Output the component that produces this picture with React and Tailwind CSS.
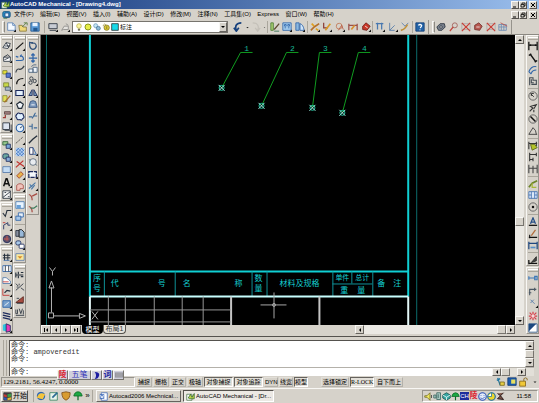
import React from "react";
import clsx from "clsx";

const NAVY = "#1c2a5c";
const INK = "#26303c";
const BLUE = "#2f64a8";
const RED = "#c0302c";

const corner = <path d="M12 9v3H9z" fill="#111" stroke="none" />;

// Every glyph is drawn on a 12x12 grid
const ICONS = {
  app: <><path d="M1 3h7v8H1z" fill="#fff" stroke="#48734a" /><path d="M3 8l3-5 2 4 3-5v7H5z" fill="#b8d24a" stroke="#33682f" /></>,
  doc: <><rect x="1" y="2" width="10" height="8" rx="2" fill="#2a8fc4" stroke="#14517f" /><path d="M4 4h5v5H4z" fill="#dff2ff" stroke="#1c3e7a" /><path d="M2 11h5" stroke="#2f6a34" /></>,
  newFile: <><path d="M2 1h6l3 3v6H2z" fill="#f4f9ff" stroke="#5a82b4" /><path d="M8 1v3h3" stroke="#5a82b4" />{corner}</>,
  openFile: <><path d="M1 4h4l1 2h4v5H2z" fill="#f0d878" stroke="#8a7a3c" /><path d="M5 6l5-5M7 1h4v3" stroke="#567a3c" /></>,
  save: <><path d="M1 1h10v10H1z" fill="#5b9bd8" stroke="#24588f" /><path d="M3 1h6v4H3z" fill="#e8f2ff" stroke="none" /><path d="M4 7h5v4H4z" fill="#24588f" stroke="none" /></>,
  plot: <><path d="M1 2h10v6H1z" fill="#c8ccd4" stroke={INK} /><path d="M2 10h8" stroke={INK} />{corner}</>,
  props: <><path d="M2 10l3-5h5v4H4z" fill="#e4e2de" stroke="#8c8a88" /><path d="M7 2l3 2" stroke="#8c8a88" />{corner}</>,
  bulb: <><circle cx="6" cy="4.500" r="3.500" fill="#fbf6a0" stroke="#b4a83a" /><path d="M5 9h2v2H5z" fill="#8a8a60" stroke="#5c5c40" /></>,
  sun: <circle cx="6" cy="6" r="4.500" fill="#e8ee48" stroke="#8c9a1c" strokeWidth="1.500" />,
  freeze: <><circle cx="4" cy="4" r="3" fill="#c4e4f4" stroke="#5c8eb0" /><circle cx="8" cy="8" r="3" fill="#8cbcd8" stroke="#40688c" /></>,
  lock: <><path d="M2 5V3q2-3 4 0v2" stroke="#948a28" /><circle cx="7" cy="7" r="4" fill="#d8c838" stroke="#7a6c1c" /><path d="M7 5v4" stroke="#7a6c1c" /></>,
  swatch: <path d="M1 1h10v10H1z" fill="#18d8e8" stroke="#101010" />,
  undo: <path d="M10 1C4 1 2 5 4 10M1 7l3 4 3-4" stroke="#16407c" strokeWidth="2" />,
  redo: <path d="M2 1c6 0 8 4 6 9M11 7l-3 4-3-4" stroke="#c4c0b8" strokeWidth="1.500" />,
  dot: <path d="M3 5h6L6 8z" fill="#222" stroke="none" />,
  match: <><path d="M1 1h3v9H1z" fill="#a8cc70" stroke="#4c7c34" /><path d="M5 9l6-7" stroke="#5c4a30" strokeWidth="1.500" /><path d="M5 11h6" stroke="#2c6c4c" /></>,
  palette: <><path d="M1 1h10v9H1z" fill="#a8d0f0" stroke={BLUE} /><path d="M3 3h2v2H3zM7 3h2v2H7zM3 7h2M7 7h2" stroke={BLUE} />{corner}</>,
  sheets: <><path d="M1 1h4v9H1z" fill="#8cb8e0" stroke={BLUE} /><path d="M6 2q4 1 5 8H6z" fill="#cfe4f8" stroke={BLUE} />{corner}</>,
  editA: <><path d="M1 10l4-4 6-4" stroke="#b4702c" strokeWidth="2" /><path d="M2 2l3 3M7 8l3 2" stroke="#e0a020" strokeWidth="2" />{corner}</>,
  editB: <><path d="M2 1v6h5" stroke="#8c4038" strokeWidth="1.500" /><path d="M4 10l6-8" stroke="#d89828" strokeWidth="2" />{corner}</>,
  editC: <><circle cx="5" cy="5" r="3.500" stroke="#c07858" /><path d="M4 10l4-6 2 5" stroke="#b8543c" />{corner}</>,
  editD: <><path d="M1 2v8M11 2v8M1 4h10" stroke="#9c5048" strokeWidth="1.500" /><path d="M4 9l4-5" stroke="#d89030" strokeWidth="2" /></>,
  part: <><path d="M2 5l4-4 5 4-4 5-5-1z" fill="#c83828" stroke="#701c18" /><path d="M5 5l3 2" stroke="#fff" />{corner}</>,
  ucsA: <><path d="M3 1v8M8 1v8M1 2h9" stroke="#4878b0" strokeWidth="1.500" />{corner}</>,
  ucsB: <><path d="M2 1v9h6M2 10l6-6" stroke="#5078a8" />{corner}</>,
  brush: <><path d="M2 1l4 4 4-4" stroke="#547cb0" /><path d="M1 10q5-1 8-7" stroke="#c09038" strokeWidth="2" /></>,
  help: <><path d="M1 1h10v10H1z" fill="#2464a8" stroke="#123c74" /><path d="M4 4q2-2 4 0 0 2-2 3M6 9v1" stroke="#fff" strokeWidth="1.500" /></>,
  gear: <><path d="M1 6l4-4h5l1 4-4 4H3z" fill="#78808c" stroke={INK} /><circle cx="6" cy="6" r="1.500" fill="#e8e8e8" stroke={INK} /></>,
  find: <><circle cx="7" cy="4" r="3" stroke="#a05c54" /><path d="M1 11l4-5" stroke="#c0453c" strokeWidth="1.500" /></>,
  cross: <><path d="M1 2h10v7H1z" stroke="#b0a8a8" /><path d="M1 1l10 10M11 1L1 11" stroke="#c84038" strokeWidth="1.500" /></>,
  mech: <><path d="M2 4l5-3 4 4-3 5-6-1z" fill="#b85850" stroke="#74302c" /><path d="M4 6h4" stroke="#eee" /></>,
  grid: <><path d="M1 3h9v7H1zM1 6h9M4 3v7M7 3v7" stroke="#6c8cb4" /><path d="M3 1l8 4" stroke="#c05048" /></>,

  view: <><path d="M1 8l4-6 5 1-3 6z" fill="#fff" stroke={INK} /><path d="M3 6h7M5 2l3 6" stroke={INK} />{corner}</>,
  sketch: <><path d="M2 5h8v5H2z" fill="#fff" stroke={INK} /><path d="M2 5l5-3 3 3M3 8l5-2" stroke={INK} />{corner}</>,
  layerA: <><path d="M1 2h5v4H1z" fill="#e8e038" stroke="#7c8430" /><path d="M5 5h5v5H5z" fill="#5878d0" stroke="#243c84" />{corner}</>,
  layerB: <><path d="M2 1h6v5H2z" fill="#c8d848" stroke="#788438" /><path d="M4 6h6v4H4z" fill="#a8b8c8" stroke="#506070" />{corner}</>,
  layerC: <><path d="M1 2h5v7H1z" fill="#e0e058" stroke="#8c8c38" /><path d="M3 10l7-8" stroke="#a86c28" strokeWidth="1.500" />{corner}</>,
  screw: <><path d="M3 2h7v3H3z" fill="#a08080" stroke="#5c4444" /><path d="M4 6v3H1" stroke="#9c3c38" strokeWidth="1.500" />{corner}</>,
  copyBox: <><path d="M1 1h8v8H1z" fill="#dce4f0" stroke={INK} /><path d="M3 10h8V3" stroke={INK} />{corner}</>,
  block: <><path d="M1 2h6v4H1z" fill="#98c890" stroke="#2c6034" /><path d="M5 5h5v5H5z" fill="#78a8d8" stroke={NAVY} />{corner}</>,
  blocks: <><rect x="1" y="1" width="7" height="6" rx="2" fill="#6ca8a0" stroke={NAVY} /><path d="M5 5h5v5H5z" fill="#88acd8" stroke={NAVY} />{corner}</>,
  panel: <><path d="M1 2h9v7H1z" fill="#c4dcf4" stroke="#5478a8" />{corner}</>,
  textA: <><path d="M2 10l3-9h1l3 9M3 7h5" stroke="#111" strokeWidth="1.800" />{corner}</>,
  table: <><path d="M1 1h9v9H1z" fill="#f4f4f4" stroke={INK} /><path d="M1 9l9-7M3 3h2M7 8h2" stroke={INK} />{corner}</>,
  check: <><path d="M1 6l3 4 2-7h5" stroke={INK} strokeWidth="1.300" />{corner}</>,
  jog: <><path d="M2 10V5l5-3v3h3" stroke={NAVY} /><path d="M1 2h3" stroke={RED} />{corner}</>,
  ball: <><circle cx="6" cy="6" r="4.500" fill="#605068" stroke={NAVY} /><path d="M2 6h6M6 2v6" stroke="#d85c50" />{corner}</>,
  spring: <><path d="M1 4h9M1 7h9M3 2v8M7 2v8" stroke={INK} strokeWidth="1.200" /><path d="M2 10h7" stroke={BLUE} />{corner}</>,
  cols: <><path d="M1 2h10v7H1z" fill="#fff" stroke={BLUE} /><path d="M4 2v7M8 2v7" stroke={INK} />{corner}</>,
  chart: <><path d="M1 9V2h4l5 4v3z" fill="#fff" stroke="#5078a8" /><path d="M1 7h7" stroke={RED} />{corner}</>,
  axis: <><path d="M1 2v8h8" stroke={RED} /><path d="M3 7l3-3 4 1" stroke={INK} strokeWidth="1.500" />{corner}</>,
  calc: <><path d="M1 2h9v8H1z" fill="#78a0cc" stroke={BLUE} /><path d="M3 8l5-4" stroke="#fff" />{corner}</>,
  threads: <><path d="M1 2l9 2M1 5l9 2M1 8l9 2" stroke={NAVY} strokeWidth="1.500" />{corner}</>,
  color: <><path d="M1 2l4-1v9l-4-1z" fill="#30c4e0" stroke="none" /><path d="M5 1l5 2v7l-5 1z" fill="#e838b8" stroke={NAVY} />{corner}</>,

  line: <><path d="M1 10l9-8" stroke="#111" strokeWidth="1.400" />{corner}</>,
  pline: <path d="M1 9h6q4 0 3-3T6 4l2-2M1 4l3 1" stroke={BLUE} strokeWidth="1.400" />,
  spline: <path d="M1 9q1-5 4-4t6-4" stroke="#3c444c" strokeWidth="1.400" />,
  arc: <><path d="M2 10Q2 3 10 3" stroke="#111" strokeWidth="1.400" />{corner}</>,
  rect: <><path d="M1 3h9v6H1z" fill="#e4f0fc" stroke={NAVY} strokeWidth="1.400" />{corner}</>,
  polygon: <path d="M6 2l4 3-2 5H4L2 5z" fill="#f0f4f8" stroke={INK} strokeWidth="1.400" />,
  cloud: <path d="M2 3q2-3 4-1 4-1 4 2 2 3-1 4-1 3-3 1-4 1-4-2-2-2 0-4z" fill="#e0f0ff" stroke={NAVY} strokeWidth="1.300" />,
  circle: <><circle cx="6" cy="6" r="4.500" fill="#e4f0fc" stroke={BLUE} strokeWidth="1.400" /><path d="M6 6l3-2" stroke={INK} />{corner}</>,
  dashed: <><path d="M1 10l9-8" stroke="#444" strokeDasharray="3 1" />{corner}</>,
  hatch: <><path d="M1 1h10v10H1z" fill="#b8d4f4" stroke="none" /><path d="M1 3l8 8M1 7l4 4M3 1l8 8M7 1l4 4M9 1L1 9M11 3l-8 8M5 1L1 5M11 7l-4 4" stroke="#4878c0" /></>,
  xline: <><path d="M1 10l9-8M2 3l9 6" stroke={RED} strokeWidth="1.400" />{corner}</>,
  eraser: <><path d="M2 7l5-5 3 3-5 5z" fill="#e8b44c" stroke="#9c3c24" />{corner}</>,
  region: <><path d="M2 10V4q4-4 8 0v4H6v2z" fill="#f0c4bc" stroke="#a85048" />{corner}</>,
  sheet: <><path d="M1 2h10v8H1z" fill="#e8f4ff" stroke="#4c7cb0" /><path d="M2 6h5v4H2z" fill="#68a0d8" stroke="none" /></>,
  stack: <><path d="M4 1h6v5H4z" fill="#e8f0f8" stroke={BLUE} /><path d="M1 5h6v5H1z" fill="#a8c8e8" stroke={BLUE} /></>,
  paste: <><path d="M1 3h4v7H1z" fill="#8890a0" stroke={INK} /><path d="M5 2h3l3 3v6H5z" fill="#98b8d8" stroke="#111" /></>,
  link: <><rect x="1" y="1" width="6" height="5" rx="2" fill="#a8c8e8" stroke={NAVY} /><rect x="5" y="5" width="6" height="5" rx="1" fill="#fff" stroke={NAVY} />{corner}</>,
  mail: <><path d="M1 2h10v8H1z" fill="#f8e8a0" stroke="#5c7cb0" /><path d="M3 5h6L6 8z" fill="#d88828" stroke="none" /></>,
  weldA: <path d="M1 3v6M4 2v3M4 7v3M7 3h3M7 8h3M1 6h9" stroke={INK} strokeWidth="1.400" />,
  weldB: <path d="M1 2l3 3M1 10l9-8M7 7l4 3M5 2v2M2 6h2" stroke={INK} />,
  weldC: <><path d="M1 9l9-7v7z" fill="#a84c40" stroke="#58241c" /><path d="M2 10h8M2 4h3" stroke={INK} /></>,
  weldD: <path d="M1 3v5h2V3M5 2l2 6 2-6M10 4v5M1 10h10" stroke={INK} />,

  rotate: <path d="M4 3q5-2 6 3-1 4-4 4T2 6V1M2 2h4" stroke="#34547c" strokeWidth="1.500" />,
  move: <path d="M6 1v10M1 6h10M4 3l2-2 2 2M4 9l2 2 2-2" stroke={BLUE} strokeWidth="1.500" />,
  copy: <><path d="M1 6h5v4H1zM6 4h5v6H6z" fill="#eef4fa" stroke="#48607c" /><path d="M4 3l3-2h3" stroke="#48607c" /></>,
  array: <><circle cx="4" cy="3" r="2" stroke={INK} /><circle cx="8" cy="6" r="2" stroke={INK} /><circle cx="3" cy="8" r="2" stroke={INK} />{corner}</>,
  mirror: <><path d="M5 2v7H1zM7 2v7h4z" fill="#7898bc" stroke={NAVY} />{corner}</>,
  offset: <><path d="M2 6q0-4 4-4t4 4l1 4H1z" fill="#7c98bc" stroke="#34507c" /><path d="M4 7h4" stroke="#fff" /></>,
  trim: <path d="M1 7h4M7 6h4M5 9l4-7" stroke="#3c6898" strokeWidth="1.300" />,
  extend: <path d="M1 5h4M7 7h4M5 2v7" stroke="#3c6898" strokeWidth="1.300" />,
  lengthen: <path d="M1 11l5-5 5-4" stroke={INK} strokeWidth="1.600" />,
  scale: <><path d="M2 2h4v8H2z" fill="#fff" stroke={NAVY} /><path d="M6 2l4 8H6" stroke={BLUE} />{corner}</>,
  brk: <><circle cx="6" cy="6" r="4" fill="#e8ecf0" stroke="#586878" /><path d="M1 3l2 1M9 9l2 1" stroke="#586878" /></>,
  stretch: <><path d="M1 3h9v7H1z" fill="#f4f8fc" stroke={NAVY} strokeWidth="1.500" strokeDasharray="5 1" />{corner}</>,
  chamfer: <><path d="M1 9l8-7M4 10l4-5M2 4l3 3" stroke="#4878a8" strokeWidth="1.300" />{corner}</>,
  split: <path d="M1 3q4 1 4 7M5 5l6-3" stroke="#a84c44" strokeWidth="1.500" />,
  splitB: <><path d="M1 3q4 1 4 7" stroke="#a84c44" strokeWidth="1.500" /><path d="M3 5h4l4-3" stroke="#3c7c5c" strokeWidth="1.500" /></>,

  dimH: <path d="M1 1v10M11 1v10M1 5h10M3 4v2M9 4v2" stroke="#111" strokeWidth="1.500" />,
  dimA: <path d="M1 3l3-2M8 11l3-2M3 2l6 8" stroke="#111" strokeWidth="1.800" />,
  dimArc: <path d="M1 8q3-7 9-6M4 10q1-4 6-4M1 8l3 3" stroke={BLUE} strokeWidth="1.300" />,
  dimOrd: <path d="M2 11V2h4v3h4v5H4M4 4v4h3" stroke="#444c54" strokeWidth="1.300" />,
  radius: <><circle cx="6" cy="6" r="5" stroke="#555" /><path d="M3 3l4 4M4 6V3h3" stroke="#222" /></>,
  dimJog: <path d="M2 10l4-4-3-2 7-2-3 5M7 8v3" stroke="#333" strokeWidth="1.300" />,
  diameter: <><circle cx="6" cy="6" r="5" stroke="#555" /><path d="M3 3l6 6" stroke="#111" strokeWidth="1.800" /></>,
  angle: <path d="M1 10h10M1 10l5-8q4 3 4 8" stroke="#333" />,
  quick: <><path d="M1 1v9M10 1v5M1 3h10" stroke="#333" strokeWidth="1.300" /><path d="M3 4h5l3 4-6 3z" fill="#b4c428" stroke="#586418" /></>,
  base: <path d="M2 1v10M10 1v4M6 7v4M2 3h8M2 9h4" stroke="#333" strokeWidth="1.300" />,
  cont: <path d="M1 1v10M6 2v9M11 1v10M1 5h10" stroke="#444" strokeWidth="1.300" />,
  leader: <><path d="M1 10l4-5 6-3" stroke="#6c8428" strokeWidth="2" /><path d="M5 5v5h5" stroke="#a8b838" strokeWidth="1.500" /></>,
  tol: <><path d="M1 2h10v8H1zM4 2v8M8 2v8M1 6h3M8 6h3" fill="#dce8f8" stroke="#4070b0" /></>,
  center: <><circle cx="6" cy="6" r="5" stroke="#555" /><circle cx="6" cy="6" r="1.500" fill="#111" stroke="none" /></>,
  dimEdit: <><path d="M3 8l3-7 3 7M4 6h4" stroke="#244c84" strokeWidth="1.500" /><path d="M1 10h10" stroke="#111" strokeWidth="1.500" /></>,
  dimText: <><path d="M4 8l5-7" stroke="#b06c3c" strokeWidth="1.500" /><path d="M1 10h10M2 7v4" stroke="#111" strokeWidth="1.300" /></>,
  dimUpd: <><path d="M1 2v9M11 2v9M1 4h10" stroke="#204880" strokeWidth="1.500" /><path d="M3 9h6" stroke="#5890c8" strokeWidth="2" /></>,
  dimStyle: <><path d="M1 10h10M1 6v5" stroke="#111" strokeWidth="1.500" /><path d="M4 9l6-7v5z" fill="#444" stroke="#222" /></>,
  bolt: <path d="M1 6h9M1 4v4M8 4v4h3V4z" stroke="#3c78b8" strokeWidth="1.300" />,
  pipe: <path d="M2 11V4h8M1 8h3M8 2v4" stroke="#4c5864" strokeWidth="1.300" />,
  star: <><path d="M3 2l5 5M3 6l4-4" stroke="#5078a8" />{corner}</>,
  burst: <><path d="M6 1v10M1 6h10M2 2l8 8M10 2l-8 8" stroke="#d8404c" strokeWidth="1.500" /><circle cx="6" cy="6" r="2" fill="#f4d8d8" stroke="none" /></>,
  shade: <><path d="M1 1h10v10H1z" fill="#fff" stroke="#345c8c" /><path d="M1 1h9L1 10z" fill="#1c4880" stroke="none" /></>,

  ie: <><circle cx="6" cy="6" r="4.500" fill="#3c88e0" stroke="#1c509c" /><path d="M1 8Q4 0 11 4L8 10z" fill="#f4c43c" stroke="none" /></>,
  desk: <><path d="M1 2h9v9H1z" fill="#e8f4ec" stroke="#3c8464" /><path d="M4 8l6-6" stroke="#2c6c94" strokeWidth="2" /></>,
  shield: <path d="M6 1l5 1q0 7-5 9Q1 9 1 2z" fill="#d89c30" stroke="#80501c" />,
  umbrella: <><path d="M1 6q1-5 5-5t5 5z" fill="#1ca844" stroke="#0c6c28" /><path d="M6 6v5" stroke="#0c6c28" strokeWidth="1.500" /></>,
  word: <><path d="M3 1h8v10H3z" fill="#fff" stroke="#3c64b0" /><path d="M1 3h6v6H1z" fill="#3464b8" stroke="none" /><path d="M2 4l1 4 1-3 1 3 1-4" stroke="#fff" /></>,
  flag: <><path d="M1 1h10v10H1z" fill="#443c44" stroke="#333" /><path d="M1 3l4 1v3L1 6z" fill="#c83c34" stroke="none" /><path d="M6 3l5-1v4L6 7z" fill="#3c9c44" stroke="none" /><path d="M1 7l4 1v3l-4-1z" fill="#3058b8" stroke="none" /><path d="M6 8l5-1v3l-5 1z" fill="#e0b830" stroke="none" /></>,
  speaker: <><path d="M1 5h3l4-4v10L4 7H1z" fill="#f0e860" stroke="#6c641c" /><path d="M10 4v4" stroke="#333" /></>,
  net: <><path d="M1 4h3v4H1zM5 1h5v9H5z" fill="#a8c8c0" stroke="#34605c" /><path d="M7 3v5" stroke="#34605c" /></>,
  cube: <><path d="M1 4l5-3 5 3v4l-5 3-5-3z" fill="#38a8a4" stroke="#14504c" /><path d="M1 4l5 3 5-3M6 7v4" stroke="#fff" /></>,
  smile: <><circle cx="6" cy="6" r="5" fill="#e4ecf8" stroke="#2c54b8" strokeWidth="1.500" /><path d="M3 8q3 2 6-1M4 4v1M8 4v1" stroke="#2c54b8" /></>,
  pie: <><circle cx="6" cy="6" r="5" fill="#ecd82c" stroke="#186ca0" strokeWidth="1.500" /><path d="M6 1v5H1" fill="#fff" stroke="#186ca0" /></>,
  phone: <><path d="M2 2l4 3 4-4M2 9l4-4 4 5z" fill="#7c5444" stroke="#2c1c1c" strokeWidth="1.300" /></>,
  comm: <><path d="M2 1l3 9M1 4l4-2" stroke="#1c74a0" strokeWidth="1.500" /><path d="M5 6h5v4H5z" fill="#e8d044" stroke="#7c6c20" /></>,
  tray: <><path d="M1 1h10v9H1z" fill="#1c5cb0" stroke="#123c74" /><path d="M5 3h5v5H5z" fill="#e8e060" stroke="none" /></>,
  unlock: <><path d="M2 5h7v6H2z" fill="#f0c838" stroke="#886818" /><path d="M7 5V2q2-2 4 0v2" stroke="#886818" /></>,
};

const Icon = ({ name, className = "size-[9px]" }) => (
  <svg viewBox="0 0 12 12" fill="none" className={clsx("shrink-0", className)} aria-hidden="true">
    {ICONS[name]}
  </svg>
);

const Tool = ({ name }) => (
  <button type="button" aria-label={name} className="flex w-[12px] shrink-0 items-center justify-center">
    <Icon name={name} className="size-[10px]" />
  </button>
);

const Separator = () => <div className="h-[12px] w-px shrink-0 bg-[#aaa69c]" />;

const Grip = () => <div className="h-[12px] w-[3px] shrink-0 border border-[#f8f7f4] border-r-[#8c8982]" />;

const ARROWS = {
  up: "M2 5l2-2 2 2z",
  down: "M2 3l2 2 2-2z",
  left: "M5 2L3 4l2 2z",
  right: "M3 2l2 2-2 2z",
  first: "M2 2h1v4H2zM6 2L4 4l2 2z",
  last: "M5 2h1v4H5zM2 2l2 2-2 2z",
};

const ArrowButton = ({ dir, className = "h-[9px] w-[9px]" }) => (
  <button
    type="button"
    aria-label={dir}
    className={clsx("flex shrink-0 items-center justify-center border border-[#f8f7f4] border-r-[#66635e] border-b-[#66635e] bg-[#d6d2ca]", className)}
  >
    <svg viewBox="0 0 8 8" className="size-[8px] shrink-0 fill-black" aria-hidden="true">
      <path d={ARROWS[dir]} />
    </svg>
  </button>
);

const Thumb = ({ className }) => (
  <div className={clsx("shrink-0 border border-[#f8f7f4] border-r-[#77746e] border-b-[#77746e] bg-[#d6d2ca]", className)} />
);

const WindowButtons = () => (
  <div className="flex h-[8px] items-center">
    {["minimize", "restore", "close"].map((name) => (
      <button
        key={name}
        type="button"
        aria-label={name}
        className={clsx(
          "flex h-[8px] w-[8px] items-center justify-center border border-[#f8f7f4] border-r-[#55524e] border-b-[#55524e] bg-[#d6d2ca]",
          name === "close" && "ml-[2px]"
        )}
      >
        <svg viewBox="0 0 6 6" className="size-[6px] shrink-0" fill="none" stroke="#000" aria-hidden="true">
          {name === "minimize" && <path d="M1 5h3" />}
          {name === "restore" && <path d="M2 2V1h3v3H4M1 2.500h3V5H1z" strokeWidth="0.800" />}
          {name === "close" && <path d="M1 1l4 4M5 1L1 5" />}
        </svg>
      </button>
    ))}
  </div>
);

const MENUS = ["文件(F)", "编辑(E)", "视图(V)", "插入(I)", "辅助(A)", "设计(D)", "修改(M)", "注释(N)", "工具集(O)", "Express", "窗口(W)", "帮助(H)"];

const TopToolbar = () => (
  <div className="flex h-[15px] shrink-0 items-center border-b border-[#8c8982]">
    <div className="flex h-full w-[429px] shrink-0 items-center border-r border-[#96938c] pr-[2px] pl-[2px]">
      <Grip />
      <Tool name="newFile" />
      <Tool name="openFile" />
      <Tool name="save" />
      <div className="mr-[2px] ml-[3px]"><Separator /></div>
      <Tool name="plot" />
      <Tool name="props" />
      <div className="ml-[1px] flex h-[12px] w-[156px] shrink-0 items-center gap-px border border-[#77746e] bg-white pl-[2px]">
        {["bulb", "sun", "freeze", "lock", "swatch"].map((name) => (
          <Icon key={name} name={name} className="size-[8px]" />
        ))}
        <select aria-label="图层" className="h-[10px] min-w-0 flex-1 appearance-none bg-white text-[6px] leading-[10px]" defaultValue="标注">
          <option>标注</option>
        </select>
        <ArrowButton dir="down" className="h-[10px] w-[8px]" />
      </div>
      <div className="ml-[4px] flex flex-1 items-center justify-between">
        <Tool name="undo" />
        <Icon name="dot" className="size-[5px]" />
        <Tool name="redo" />
        <Icon name="dot" className="size-[3px]" />
        <Separator />
        <Tool name="match" />
        <Tool name="palette" />
        <Tool name="sheets" />
        <Separator />
        <Tool name="editA" />
        <Tool name="editB" />
        <Tool name="editC" />
        <Tool name="editD" />
        <Tool name="part" />
        <Separator />
        <Tool name="ucsA" />
        <Tool name="ucsB" />
        <Tool name="brush" />
        <Separator />
        <Tool name="help" />
      </div>
    </div>
    <div className="flex h-full w-[83px] shrink-0 items-center justify-between border-r border-[#96938c] pr-[2px] pl-[3px]">
      <Grip />
      {["gear", "find", "cross", "mech", "cross", "grid"].map((name, i) => (
        <Tool key={i} name={name} />
      ))}
    </div>
  </div>
);

// "-" is a divider between tools
const GROUP_1 = [
  { size: "h-[98px]", icons: ["view", "sketch", "-", "layerA", "layerB", "layerC", "-", "screw", "copyBox"] },
  { size: "h-[67px]", icons: ["block", "blocks", "panel", "textA", "table"] },
  { size: "h-[43px]", icons: ["check", "jog", "ball"] },
  { size: "h-[88px]", icons: ["spring", "cols", "chart", "axis", "calc", "threads", "color"] },
];

const GROUP_2 = [
  { size: "h-[158px]", icons: ["line", "pline", "spline", "arc", "rect", "polygon", "cloud", "circle", "dashed", "hatch", "xline", "eraser", "region"] },
  { size: "h-[69px]", icons: ["sheet", "stack", "-", "paste", "link", "mail"] },
  { size: "h-[54px]", icons: ["weldA", "weldB", "weldC", "weldD"] },
];

const GROUP_3 = [
  { size: "h-[180px]", icons: ["rotate", "move", "copy", "array", "mirror", "offset", "trim", "extend", "lengthen", "scale", "brk", "stretch", "chamfer", "split", "splitB"] },
];

const GROUP_RIGHT = [
  { size: "h-[231px]", icons: ["dimH", "dimA", "dimArc", "dimOrd", "-", "radius", "dimJog", "diameter", "angle", "-", "quick", "base", "cont", "-", "leader", "tol", "center", "-", "dimEdit", "dimText", "dimUpd", "-", "dimStyle"] },
  { size: "h-[67px]", icons: ["bolt", "pipe", "star", "burst", "shade"] },
];

const SideToolbar = ({ groups }) => (
  <div className="flex w-[13px] shrink-0 flex-col gap-px">
    {groups.map((group, i) => (
      <div
        key={i}
        className={clsx("flex shrink-0 flex-col items-center border border-[#f8f7f4] border-r-[#96938c] border-b-[#96938c] pt-px", group.size)}
      >
        <div className="h-[3px] w-[10px] shrink-0 border-y border-[#aaa69c] border-t-white" />
        <div className="flex min-h-0 flex-1 flex-col items-center justify-between pt-px">
          {group.icons.map((name, j) =>
            name === "-" ? <div key={j} className="h-px w-[10px] bg-[#aaa69c]" /> : <Tool key={j} name={name} />
          )}
        </div>
      </div>
    ))}
  </div>
);

const LEADERS = [
  { label: "1", x: 247, tip: [222, 88] },
  { label: "2", x: 293, tip: [262, 106] },
  { label: "3", x: 326, tip: [313, 108] },
  { label: "4", x: 365, tip: [343, 113] },
];

const TITLE_CELLS = [
  ["序", 97, 282], ["号", 97, 292], ["代", 115, 287], ["号", 162, 287], ["名", 187, 287], ["称", 239, 287],
  ["数", 259, 282], ["量", 259, 292], ["材料及规格", 300, 287], ["备", 382, 287], ["注", 398, 287],
  ["重", 345, 294], ["量", 362, 294],
];

const Drawing = () => (
  <svg viewBox="41 35 475 291" preserveAspectRatio="xMinYMin slice" fill="none" className="absolute inset-0 size-full">
    <g stroke="#0c6c6c">
      <path d="M46.500 35v291M417.500 35v291" />
    </g>
    <g stroke="#10d0d4" strokeWidth="2">
      <path d="M90 35v262M409 35v262M90 272h319" />
    </g>
    <g stroke="#0f9298">
      <path d="M104.500 272v25M175.500 272v25M252.500 272v25M267.500 272v25M333.500 272v25M352.500 272v12M373.500 272v25M333 284.500h40" />
    </g>
    <path d="M90 297h319" stroke="#c8ffff" strokeWidth="2" />
    <path d="M90 297v29M409 297v29" stroke="#e4f8f8" strokeWidth="2" />
    <path d="M231.500 297v29M320 297v29" stroke="#c4c4c4" strokeWidth="2" />
    <path d="M90 310.500h141M90 322.500h141M108.500 297v29M125.500 297v29M154.500 297v29M182.500 297v29M203.500 297v29" stroke="#969696" />

    <g fill="#14ced2" textAnchor="middle" className="font-['Liberation_Serif','Noto_Sans_CJK_SC',serif] text-[8px]">
      {TITLE_CELLS.map(([text, x, y], i) => (
        <text key={i} x={x} y={y}>{text}</text>
      ))}
      <g className="text-[7px]">
        <text x="343" y="281">单件</text>
        <text x="363" y="281">总计</text>
      </g>
    </g>

    {/* Balloon leaders */}
    {LEADERS.map(({ label, x, tip }) => (
      <g key={label}>
        <path d={`M${x + 6} 52.500h-12L${tip[0]} ${tip[1]}`} stroke="#109c20" />
        <text x={x} y="51" fill="#18b898" textAnchor="middle" className="font-['Liberation_Mono',monospace] text-[8px]">{label}</text>
        <g transform={`translate(${tip[0]} ${tip[1]})`}>
          <circle r="2.500" stroke="#20c4a0" />
          <path d="M-3-3l6 6M3-3l-6 6" stroke="#a0ece0" />
        </g>
      </g>
    ))}

    {/* Cursor */}
    <path d="M261 305.500h26M274.500 293v26" stroke="#a8a8a8" />
    <circle cx="274.500" cy="305.500" r="1.500" stroke="#a8a8a8" />

    {/* UCS symbol */}
    <g stroke="#b4b4b4">
      <path d="M48.500 313.500h5v5h-5zM51.500 313v-25M54 316.500h25M49 288.500l2.500-7 2.500 7zM79.500 314l6 2.500-6 2.500z" />
      <path d="M49.500 268l3 4v4M55.500 268l-3 4M92 312l6 8M98 312l-6 8" />
    </g>
  </svg>
);

const SheetTabs = () => (
  <div className="flex h-[9px] shrink-0 bg-[#d6d2ca]">
    <div className="flex w-[41px] shrink-0">
      {["first", "left", "right", "last"].map((dir) => (
        <ArrowButton key={dir} dir={dir} className="h-[9px] w-[10px]" />
      ))}
    </div>
    <div className="flex flex-1 text-[7px] leading-[9px]">
      <button type="button" className="w-[21px] rounded-b-[4px] bg-black text-center text-white">模型</button>
      <button type="button" className="w-[23px] rounded-b-[4px] border-x border-b border-[#55524e] bg-[#e6e3dc] text-center leading-[8px] text-[#333]">
        布局1
      </button>
    </div>
    <div className="flex w-[160px] shrink-0 bg-[#ebe9e4]">
      <ArrowButton dir="left" />
      <div className="flex-1" />
      <Thumb className="h-[9px] w-[9px]" />
      <ArrowButton dir="right" />
    </div>
  </div>
);

const Workspace = () => (
  <div className="flex min-h-0 flex-1">
    <div className="flex w-[41px] shrink-0 border-r border-[#77746e]">
      <SideToolbar groups={GROUP_1} />
      <SideToolbar groups={GROUP_2} />
      <SideToolbar groups={GROUP_3} />
    </div>
    <div className="flex min-w-0 flex-1 flex-col">
      <div className="relative min-h-0 flex-1 bg-black">
        <Drawing />
      </div>
      <SheetTabs />
    </div>
    <div className="flex w-[9px] shrink-0 flex-col bg-[#ebe9e4]">
      <ArrowButton dir="up" />
      <div className="flex-1" />
      <Thumb className="h-[9px] w-[9px]" />
      <div className="h-[90px]" />
      <ArrowButton dir="down" />
      <div className="h-[9px] bg-[#d6d2ca]" />
    </div>
    <div className="flex w-[15px] shrink-0 pl-[2px]">
      <SideToolbar groups={GROUP_RIGHT} />
    </div>
  </div>
);

const IME_CELL = "flex h-[10px] shrink-0 items-center justify-center border border-[#f8f7f4] border-r-[#77746e] border-b-[#77746e] bg-[#d0d0dc]";

const CommandWindow = () => (
  <div className="relative flex h-[39px] shrink-0 pt-[3px] pr-[5px] pl-[3px]">
    <div className="mr-[2px] w-[4px] shrink-0 border-x border-[#aaa69c]" />
    <div className="flex min-w-0 flex-1 flex-col border-t border-l border-[#55524e] bg-white pl-px font-['Liberation_Mono','Noto_Sans_CJK_SC',monospace] text-[7px] leading-[7px] text-[#333]">
      <div className="flex h-[26px]">
        <div className="flex-1 pt-px whitespace-pre">
          <p>命令:</p>
          <p>命令: ampoveredit</p>
          <p>命令:</p>
        </div>
        <div className="flex w-[9px] shrink-0 flex-col bg-[#ebe9e4]">
          <ArrowButton dir="up" />
          <Thumb className="h-[8px] w-[9px]" />
          <ArrowButton dir="down" />
        </div>
      </div>
      <div className="flex h-[9px] border-t border-[#b4b1aa]">
        <label htmlFor="command" className="leading-[8px]">命令:</label>
        <input id="command" type="text" className="h-[8px] min-w-0 flex-1 bg-white outline-none" />
        <div className="flex w-[42px] shrink-0 bg-[#e2dfd8]">
          <ArrowButton dir="left" className="h-[8px] w-[9px]" />
          <Thumb className="h-[8px] w-[9px]" />
          <div className="flex-1" />
          <ArrowButton dir="right" className="mr-[8px] h-[8px] w-[9px]" />
        </div>
      </div>
    </div>
    {/* Input method bar floats over the prompt */}
    <div className="absolute top-[33px] left-[57px] flex leading-[8px]">
      <button type="button" className={clsx(IME_CELL, "w-[11px] text-[8px] font-bold text-[#dc2430]")}>陵</button>
      <button type="button" className={clsx(IME_CELL, "w-[23px] text-[8px] text-[#3434b8]")}>五笔</button>
      <button type="button" aria-label="半角" className={clsx(IME_CELL, "w-[11px]")}>
        <svg viewBox="0 0 8 8" className="size-[7px] fill-[#1c1ca0]" aria-hidden="true">
          <path d="M2 0q6 0 5 4T2 8q3-4 0-8z" />
        </svg>
      </button>
      <button type="button" className={clsx(IME_CELL, "w-[11px] text-[8px] font-bold text-[#2424a0]")}>词</button>
      <button type="button" aria-label="软键盘" className={clsx(IME_CELL, "w-[11px]")}>
        <svg viewBox="0 0 8 6" className="h-[6px] w-[8px] fill-[#b4b4b8] stroke-[#8c8c94]" aria-hidden="true">
          <path d="M0 1h8v4H0zM0 3h8" />
        </svg>
      </button>
    </div>
  </div>
);

const MODES = [
  { label: "捕捉", width: "w-[16px]" },
  { label: "栅格", width: "w-[16px]" },
  { label: "正交", width: "w-[16px]" },
  { label: "极轴", width: "w-[16px]" },
  { label: "对象捕捉", width: "w-[29px]", on: true },
  { label: "对象追踪", width: "w-[29px]", on: true },
  { label: "DYN", width: "w-[14px]" },
  { label: "线宽", width: "w-[14px]" },
  { label: "模型", width: "w-[14px]", on: true },
];

const ModeButton = ({ label, width, on }) => (
  <button
    type="button"
    aria-pressed={Boolean(on)}
    className={clsx(
      "h-[10px] shrink-0 border text-center text-[6px] leading-[8px] whitespace-nowrap",
      width,
      on ? "border-[#66635e] border-r-white border-b-white bg-[#e2dfd8]" : "border-[#e2dfd8] border-r-[#b4b1aa] border-b-[#b4b1aa]"
    )}
  >
    {label}
  </button>
);

const StatusBar = () => (
  <div className="flex h-[12px] shrink-0 items-center gap-px pr-px pl-px text-black">
    <div className="h-[10px] w-[134px] shrink-0 border border-[#96938c] border-r-white border-b-white pl-px font-['Liberation_Serif',serif] text-[7px] leading-[8px] whitespace-pre">
      129.2181, 56.4247, 0.0000
    </div>
    {MODES.map((mode) => (
      <ModeButton key={mode.label} {...mode} />
    ))}
    <div className="ml-[12px] flex gap-px">
      <ModeButton label="选择锁定" width="w-[28px]" />
      <button type="button" aria-pressed="true" className="h-[10px] w-[24px] border border-[#66635e] border-r-white border-b-white bg-[#e2dfd8] text-center font-['Liberation_Serif',serif] text-[6px] leading-[8px] whitespace-nowrap">
        R-LOCK
      </button>
      <ModeButton label="自下而上" width="w-[28px]" />
    </div>
    <div className="ml-auto flex items-center">
      <Icon name="comm" className="mr-px size-[10px]" />
      <Icon name="tray" className="mr-px size-[10px]" />
      <Icon name="unlock" className="mr-[4px] size-[10px]" />
      <Icon name="dot" className="size-[6px]" />
    </div>
  </div>
);

const TASK = "flex h-[12px] shrink-0 items-center gap-px border px-[2px] text-[6px] leading-[10px] whitespace-nowrap";

const Taskbar = () => (
  <div className="flex h-[15px] shrink-0 items-center border-t border-[#f8f7f4] px-px">
    <button type="button" className="flex h-[12px] w-[27px] shrink-0 items-center gap-px border border-[#f8f7f4] border-r-[#55524e] border-b-[#55524e] pl-px text-[7px] leading-[10px]">
      <Icon name="flag" className="size-[9px]" />
      开始
    </button>
    <div className="flex w-[68px] shrink-0 items-center justify-between pr-[3px] pl-[5px]">
      <Separator />
      {["ie", "desk", "shield", "umbrella"].map((name) => (
        <Icon key={name} name={name} className="size-[10px]" />
      ))}
      <span className="text-[8px] leading-[10px]">»</span>
      <Separator />
    </div>
    <div className="flex gap-[2px]">
      <button type="button" className={clsx(TASK, "min-w-[85px] border-[#f8f7f4] border-r-[#66635e] border-b-[#66635e]")}>
        <Icon name="word" />
        Autocad2006 Mechnical...
      </button>
      <button type="button" className={clsx(TASK, "min-w-[85px] border-[#55524e] border-r-white border-b-white bg-[#ece9e4]")}>
        <Icon name="app" />
        AutoCAD Mechanical - [Dr...
      </button>
    </div>
    <div className="ml-auto flex h-[12px] w-[116px] items-center border border-[#96938c] border-r-white border-b-white pl-px">
      {["speaker", "net", "cube", "umbrella"].map((name) => (
        <Icon key={name} name={name} />
      ))}
      <span className="h-[8px] w-[9px] bg-[#1c2c9c] text-center text-[6px] leading-[8px] text-white">CH</span>
      <span className="w-[9px] text-center text-[8px] leading-[8px] font-bold text-[#dc2430]">陵</span>
      {["smile", "pie", "phone"].map((name) => (
        <Icon key={name} name={name} />
      ))}
      <time className="ml-auto pr-[6px] text-[6px] leading-[10px]">11:58</time>
    </div>
  </div>
);

export default function App() {
  return (
    <div className="flex h-screen flex-col overflow-hidden bg-[#d6d2ca] font-['Liberation_Sans','Noto_Sans_CJK_SC',sans-serif] text-black">
      <header className="flex h-[9px] shrink-0 items-center bg-linear-to-r from-[#123478] to-[#9cc0ee] pr-[2px] pl-px">
        <Icon name="app" className="size-[9px]" />
        <h1 className="text-[6px] leading-[9px] font-bold text-white">AutoCAD Mechanical - [Drawing4.dwg]</h1>
        <div className="ml-auto"><WindowButtons /></div>
      </header>
      <nav className="flex h-[11px] shrink-0 items-center pr-[2px] pl-[2px]">
        <Icon name="doc" className="size-[9px]" />
        <div className="ml-[3px] flex w-[320px] justify-between">
          {MENUS.map((menu) => (
            <button key={menu} type="button" className="text-[6px] leading-[11px] whitespace-nowrap">
              {menu}
            </button>
          ))}
        </div>
        <div className="ml-auto"><WindowButtons /></div>
      </nav>
      <TopToolbar />
      <Workspace />
      <div className="h-[3px] shrink-0 border-b border-[#55524e]" />
      <CommandWindow />
      <StatusBar />
      <Taskbar />
    </div>
  );
}
